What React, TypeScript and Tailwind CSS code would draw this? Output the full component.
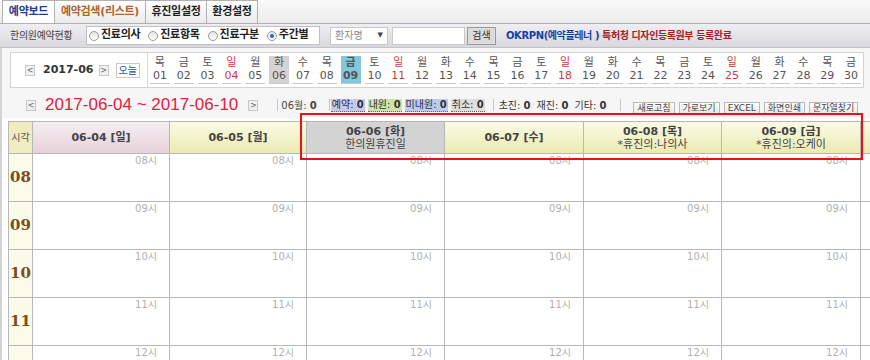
import React from "react";

const days = [
  ["목", "01"], ["금", "02"], ["토", "03"], ["일", "04"], ["월", "05"], ["화", "06"],
  ["수", "07"], ["목", "08"], ["금", "09"], ["토", "10"], ["일", "11"], ["월", "12"],
  ["화", "13"], ["수", "14"], ["목", "15"], ["금", "16"], ["토", "17"], ["일", "18"],
  ["월", "19"], ["화", "20"], ["수", "21"], ["목", "22"], ["금", "23"], ["토", "24"],
  ["일", "25"], ["월", "26"], ["화", "27"], ["수", "28"], ["목", "29"], ["금", "30"],
];

const yellow = "bg-gradient-to-b from-[#fbfbe6] to-[#ebeab0]";

const heads = [
  { t: "06-04 [일]", bg: "bg-gradient-to-b from-[#f6eef2] to-[#e6d2da]" },
  { t: "06-05 [월]", bg: yellow },
  { t: "06-06 [화]", sub: "한의원휴진일", bg: "bg-[#d3d3d3]" },
  { t: "06-07 [수]", bg: yellow },
  { t: "06-08 [목]", sub: "*휴진의:나의사", bg: yellow },
  { t: "06-09 [금]", sub: "*휴진의:오케이", bg: yellow },
];

const hours = ["08", "09", "10", "11", "12"];
const font = "font-['DejaVu_Sans','Noto_Sans_CJK_KR',sans-serif]";

function Radio({ label, on }: { label: string; on?: boolean }) {
  return (
    <span className="flex items-center gap-[2px] font-bold text-[11px] tracking-[-0.3px] text-[#222] shrink-0">
      <span className="w-[10px] h-[10px] rounded-full border border-[#9a9a9a] bg-gradient-to-b from-[#e4e4e4] to-white flex items-center justify-center">
        {on && <span className="w-[4px] h-[4px] rounded-full bg-[#2a5bd0]" />}
      </span>
      {label}
    </span>
  );
}

function SmallBtn({ children }: { children: React.ReactNode }) {
  return (
    <span className="w-[10px] h-[11px] shrink-0 border border-[#c8c8c8] bg-[#f0f0f0] text-[8px] leading-[9px] text-[#666] flex items-center justify-center">
      {children}
    </span>
  );
}

function Tool({ label }: { label: string }) {
  return (
    <span className="h-[13px] px-[3px] border border-[#b8b8b8] bg-gradient-to-b from-white to-[#e6e6e6] text-[9px] leading-[11px] text-[#444] flex items-center">
      {label}
    </span>
  );
}

function Tab({ label, w, color, active }: { label: string; w: string; color: string; active?: boolean }) {
  return (
    <div
      className={`h-[23px] ${w} shrink-0 flex items-center justify-center border-t border-r border-[#b0b0b0] font-bold text-[11px] tracking-[-0.3px] ${color} ${
        active ? "bg-white border-l" : "bg-gradient-to-b from-white to-[#ebebeb]"
      }`}
    >
      {label}
    </div>
  );
}

export default function App() {
  return (
    <div className={`relative w-[870px] h-[360px] overflow-hidden bg-white whitespace-nowrap ${font} text-[11px] text-[#333]`}>
      {/* tabs */}
      <div className="h-[24px] flex items-end bg-gradient-to-b from-[#fafafa] to-[#ececec] border-b border-[#b0b0b0] pl-[2px]">
        <Tab label="예약보드" w="w-[53px]" color="text-[#1e3d8f]" active />
        <Tab label="예약검색(리스트)" w="w-[91px]" color="text-[#b4602c]" />
        <Tab label="휴진일설정" w="w-[61px]" color="text-[#222]" />
        <Tab label="환경설정" w="w-[51px]" color="text-[#222]" />
      </div>

      {/* filter row */}
      <div className="h-[24px] flex items-center bg-gradient-to-b from-[#efeff3] to-[#d8d8de] border-b border-[#c4c4c8] pl-[10px]">
        <span className="text-[10px] text-[#444] w-[76px] tracking-[-0.3px]">한의원예약현황</span>
        <div className="h-[19px] w-[234px] shrink-0 bg-white border border-[#c0c0c0] flex items-center pl-[2px] gap-[8px]">
          <Radio label="진료의사" />
          <Radio label="진료항목" />
          <Radio label="진료구분" />
          <Radio label="주간별" on />
        </div>
        <div className="ml-[10px] h-[18px] w-[58px] shrink-0 bg-white border border-[#c8c8c8] flex items-center justify-between px-[4px] text-[10px] text-[#888]">
          환자명<span className="text-[7px] text-[#444]">▼</span>
        </div>
        <div className="ml-[4px] h-[18px] w-[73px] shrink-0 bg-white border border-[#c8c8c8]" />
        <div className="ml-[2px] h-[18px] w-[29px] shrink-0 bg-[#dcdcdc] border border-[#9a9a9a] flex items-center justify-center text-[10px] text-[#333]">검색</div>
        <span className="ml-[10px] font-bold text-[10px] tracking-[-0.4px] text-[#1b3ea6]">OKRPN(예약플레너 )</span>
        <span className="ml-[3px] font-bold text-[10px] tracking-[-0.4px] text-[#a8201e]">특허청 디자인등록원부 등록완료</span>
      </div>

      {/* mini calendar */}
      <div className="bg-[#f6f6f6] pt-[4px] pl-[8px] h-[70px] border-l-[2px] border-[#d4d4d4]">
        <div className="w-[854px] h-[36px] bg-white border border-[#d2d2d2] flex">
          <div className="w-[137px] shrink-0 flex items-center pl-[14px] border-r border-[#d8d8d8]">
            <SmallBtn>&lt;</SmallBtn>
            <span className="ml-[8px] font-bold text-[11px] text-[#333]">2017-06</span>
            <span className="ml-[5px]"><SmallBtn>&gt;</SmallBtn></span>
            <span className="ml-[7px] px-[2px] border border-[#c8c8c8] text-[10px] leading-[13px] text-[#2050c0]">오늘</span>
          </div>
          <div className="flex-1 grid grid-cols-[repeat(30,minmax(0,1fr))] pt-[3px]">
            {days.map(([w, d]) => {
              const sun = w === "일";
              const sel = d === "09";
              const today = d === "06";
              return (
                <div key={d} className="px-[2px]">
                  <div
                    className={`h-[28px] flex flex-col items-center leading-[13px] text-[11px] border-b border-[#c8c8d0] ${
                      sel ? "bg-[#82c6df] font-bold text-[#222]" : today ? "bg-[#d6d2d2]" : ""
                    } ${sun ? "text-[#d23a3a]" : "text-[#555]"}`}
                  >
                    <span>{w}</span>
                    <span>{d}</span>
                  </div>
                </div>
              );
            })}
          </div>
        </div>

        {/* week nav */}
        <div className="mt-[8px] h-[18px] flex items-center pl-[16px]">
          <SmallBtn>&lt;</SmallBtn>
          <span className="ml-[9px] text-[17px] leading-[18px] text-[#e0203c] font-['Liberation_Sans',sans-serif]">2017-06-04 ~ 2017-06-10</span>
          <span className="ml-[10px]"><SmallBtn>&gt;</SmallBtn></span>
          <span className="ml-[19px] border-l border-[#c8c8c8] h-[12px]" />
          <span className="ml-[3px] text-[10px] text-[#444]">06월: <b>0</b></span>
          <span className="ml-[12px] border-l border-[#c8c8c8] h-[12px]" />
          <span className="ml-[1px] px-[1px] bg-[#c9c9f0] border-b border-dotted border-[#666] text-[10px] leading-[12px]">예약: <b>0</b></span>
          <span className="ml-[3px] px-[1px] bg-[#cde3ac] border-b border-dotted border-[#666] text-[10px] leading-[12px]">내원: <b>0</b></span>
          <span className="ml-[3px] px-[1px] bg-[#bccbf2] border-b border-dotted border-[#666] text-[10px] leading-[12px]">미내원: <b>0</b></span>
          <span className="ml-[3px] px-[1px] bg-[#dedede] border-b border-dotted border-[#666] text-[10px] leading-[12px]">취소: <b>0</b></span>
          <span className="ml-[8px] border-l border-[#c8c8c8] h-[12px]" />
          <span className="ml-[5px] text-[10px]">초진: <b>0</b></span>
          <span className="ml-[6px] text-[10px]">재진: <b>0</b></span>
          <span className="ml-[6px] text-[10px]">기타: <b>0</b></span>
          <span className="ml-[14px] border-l border-[#c8c8c8] h-[12px]" />
          <div className="ml-[12px] mt-[6px] flex gap-[4px]">
            <Tool label="새로고침" />
            <Tool label="가로보기" />
            <Tool label="EXCEL" />
            <Tool label="화면인쇄" />
            <Tool label="문자열찾기" />
          </div>
        </div>
      </div>

      {/* week table */}
      <div className="bg-white border-l-[2px] border-[#d4d4d4] pl-[6px] pt-[3px]">
        <div className="grid grid-cols-[24px_137px_137px_138px_139px_138px_139px_40px] border-t border-l border-[#b8b8b8] w-[920px]">
          <div className="h-[32px] bg-[#f1ecc0] border-r border-b border-[#b8b8b8] flex items-center justify-center text-[10px] text-[#555]">시각</div>
          {heads.map((h) => (
            <div key={h.t} className={`h-[32px] ${h.bg} border-r border-b border-[#b8b8b8] flex flex-col items-center justify-center leading-[13px]`}>
              <span className="font-bold text-[11px] text-[#444]">{h.t}</span>
              {h.sub && <span className="text-[11px] text-[#444]">{h.sub}</span>}
            </div>
          ))}
          <div className={`h-[32px] ${yellow} border-r border-b border-[#b8b8b8]`} />
          {hours.map((hr) => (
            <React.Fragment key={hr}>
              <div className="h-[48px] bg-[#fbfbea] border-r border-b border-[#b8b8b8] flex items-center justify-center font-bold text-[15px] text-[#7b4d1c] font-['DejaVu_Serif',serif]">
                {hr}
              </div>
              {heads.map((h) => (
                <div key={h.t + hr} className="h-[48px] border-r border-b border-[#b8b8b8] flex justify-end pr-[12px] pt-[1px]">
                  <span className="text-[10px] leading-[12px] text-[#b0b0b0]">{hr}시</span>
                </div>
              ))}
              <div className="h-[48px] border-r border-b border-[#b8b8b8]" />
            </React.Fragment>
          ))}
        </div>
      </div>

      {/* annotation */}
      <div className="absolute left-[300px] top-[113px] w-[563px] h-[47px] border-2 border-[#ee1010] pointer-events-none" />
    </div>
  );
}
